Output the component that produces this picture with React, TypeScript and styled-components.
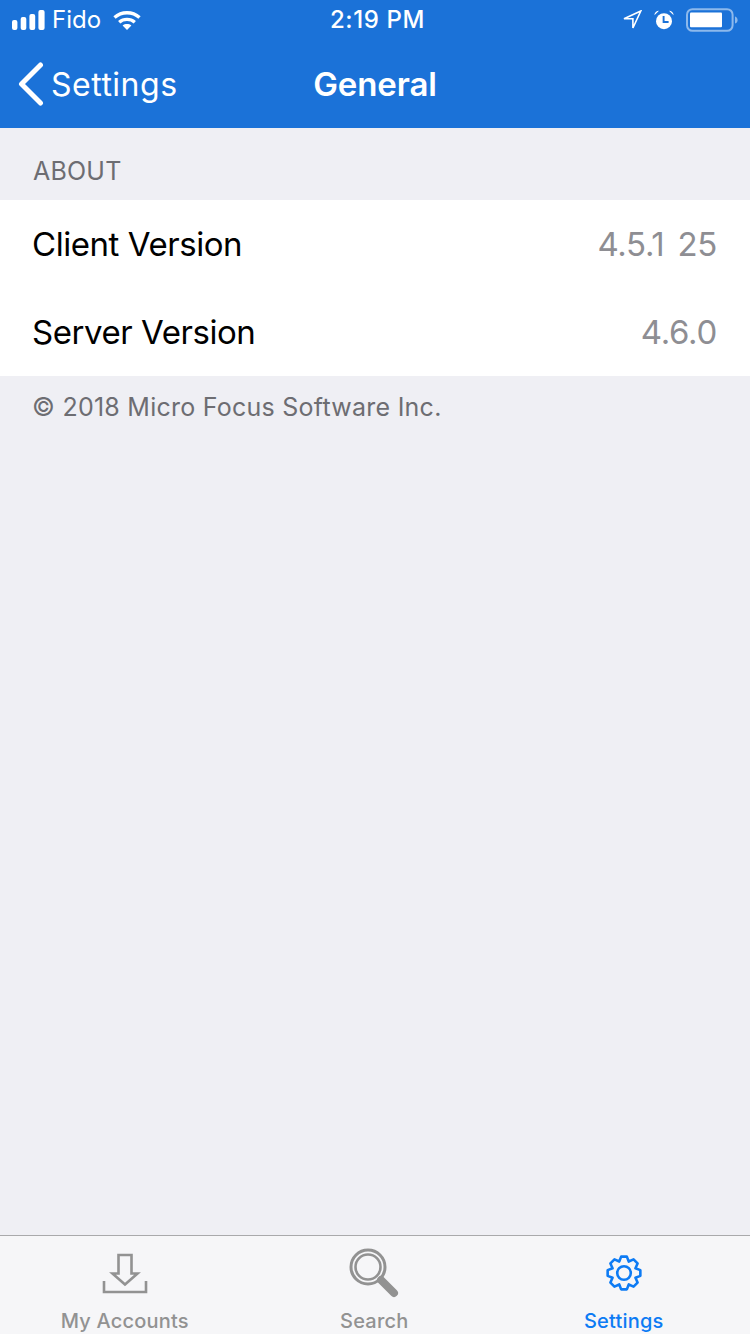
import React from 'react'
import styled, { createGlobalStyle } from 'styled-components'

const GlobalStyle = createGlobalStyle`
  html, body {
    margin: 0;
    padding: 0;
    background: #efeff4;
  }
  body {
    font-family: Inter, "Liberation Sans", sans-serif;
  }
`

const Screen = styled.div`
  width: 750px;
  height: 1334px;
  display: flex;
  flex-direction: column;
  overflow: hidden;
  background: #efeff4;
`

const Header = styled.header`
  height: 128px;
  background: #1b72d8;
  color: #fff;
  display: flex;
  flex-direction: column;
`

const StatusBar = styled.div`
  height: 40px;
  padding: 0 12px;
  display: grid;
  grid-template-columns: 1fr auto 1fr;
  align-items: center;
`

const StatusLeft = styled.div`
  display: flex;
  align-items: center;
`

const Carrier = styled.span`
  font-size: 24px;
  margin: 0 12px 0 7px;
  line-height: 40px;
`

const Clock = styled.span`
  font-size: 24px;
  font-weight: 500;
  letter-spacing: 0.6px;
  line-height: 40px;
  margin-left: 5px;
`

const StatusRight = styled.div`
  display: flex;
  align-items: center;
  justify-content: flex-end;
  gap: 12px;
`

const NavBar = styled.nav`
  height: 88px;
  display: grid;
  grid-template-columns: 1fr auto 1fr;
  align-items: center;
  padding: 0 18px;
`

const BackLink = styled.div`
  display: flex;
  align-items: center;
  gap: 7px;
  font-size: 32px;
  letter-spacing: 0.5px;
`

const Title = styled.h1`
  margin: 0;
  font-size: 33px;
  font-weight: 600;
  letter-spacing: -0.1px;
`

const Content = styled.main`
  flex: 1;
`

const SectionLabel = styled.div`
  height: 72px;
  padding: 14px 33px 0;
  display: flex;
  align-items: center;
  font-size: 25px;
  letter-spacing: 0.2px;
  color: #6d6d72;
  box-sizing: border-box;
`

const List = styled.div`
  background: #fff;
`

const Row = styled.div`
  height: 88px;
  padding: 0 33px 0 32px;
  display: flex;
  align-items: center;
  justify-content: space-between;
`

const RowLabel = styled.span`
  font-size: 33px;
  letter-spacing: -0.45px;
  color: #000;
`

const RowValue = styled.span`
  font-size: 33px;
  letter-spacing: -0.3px;
  word-spacing: 4px;
  color: #8e8e93;
`

const Footnote = styled.div`
  padding: 14px 32px 0;
  font-size: 25px;
  letter-spacing: 0.25px;
  line-height: 34px;
  color: #6d6d72;
`

const TabBar = styled.footer`
  height: 99px;
  box-sizing: border-box;
  border-top: 1px solid #a9a9ab;
  background: #f6f6f8;
  display: grid;
  grid-template-columns: repeat(3, 249.5px);
`

const Tab = styled.div<{ $active?: boolean }>`
  display: flex;
  flex-direction: column;
  align-items: center;
  color: ${p => (p.$active ? '#0d7bf4' : '#929292')};
`

const TabIcon = styled.div<{ $top: number }>`
  height: 62px;
  padding-top: ${p => p.$top}px;
  box-sizing: border-box;
  display: flex;
  align-items: flex-start;
  justify-content: center;
`

const TabLabel = styled.span`
  font-size: 20px;
  font-weight: 500;
  letter-spacing: 0.2px;
  line-height: 46px;
`

const SignalBars = () => (
  <svg width="33" height="20" viewBox="0 0 33 20" fill="#fff">
    <rect x="0" y="10" width="5.4" height="10" rx="2" />
    <rect x="8.7" y="7" width="5.6" height="13" rx="2" />
    <rect x="17.4" y="4" width="5.8" height="16" rx="2" />
    <rect x="26.4" y="0" width="6.2" height="20" rx="2" />
  </svg>
)

const WifiIcon = () => (
  <svg width="28" height="20" viewBox="0 0 28 20" fill="none" stroke="#fff" strokeWidth="3.4">
    <path d="M1.5 7.6C8.6 1.2 19.4 1.2 26.5 7.6" />
    <path d="M6.2 12.2C10.6 8.4 17.4 8.4 21.8 12.2" />
    <path d="M14 20l-4.4-4.5c2.6-1.9 6.2-1.9 8.8 0z" fill="#fff" stroke="none" />
  </svg>
)

const LocationIcon = () => (
  <svg width="20" height="20" viewBox="0 0 20 20" fill="none" stroke="#fff" strokeWidth="1.6" strokeLinejoin="miter">
    <path d="M18.8 1 2 8.8h8.9v9.2z" />
  </svg>
)

const AlarmIcon = () => (
  <svg width="20" height="20" viewBox="0 0 20 20">
    <circle cx="10" cy="11.2" r="8" fill="#fff" />
    <path d="M.4 5.2C.6 2.6 2.4.8 5 .8zM19.6 5.2C19.4 2.6 17.6.8 15 .8z" fill="#fff" />
    <path d="M9.6 6v6h5" fill="none" stroke="#1b72d8" strokeWidth="1.9" />
  </svg>
)

const BatteryIcon = () => (
  <svg width="52" height="24" viewBox="0 0 52 24">
    <rect x="1" y="1.2" width="45.6" height="21.6" rx="5.5" fill="none" stroke="#fff" strokeOpacity="0.5" strokeWidth="2" />
    <rect x="4" y="4.6" width="32" height="14.6" rx="1" fill="#fff" />
    <path d="M49 8.4c1.8.6 2.6 2 2.6 3.6s-.8 3-2.6 3.6z" fill="#fff" fillOpacity="0.5" />
  </svg>
)

const BackChevron = () => (
  <svg width="26" height="44" viewBox="0 0 26 44" fill="none" stroke="#fff" strokeWidth="5" strokeLinecap="round" strokeLinejoin="round">
    <path d="M22.5 3 3.5 22l19 19" />
  </svg>
)

const DownloadIcon = () => (
  <svg width="46" height="41" viewBox="0 0 46 41" fill="none" stroke="currentColor" strokeWidth="2.6">
    <path d="M16.5 2h13v18.5h6L23 31.5 10.5 20.5h6z" />
    <path d="M2 28v11h42V28" />
  </svg>
)

const SearchIcon = () => (
  <svg width="52" height="52" viewBox="0 0 52 52" fill="none">
    <circle cx="20" cy="20" r="17" stroke="currentColor" strokeWidth="3" />
    <circle cx="20" cy="20" r="12.5" stroke="currentColor" strokeWidth="2.6" />
    <path d="M33 33 46 46" stroke="currentColor" strokeWidth="8" strokeLinecap="round" />
  </svg>
)

// 8 teeth around the centre, worked out rather than typed by hand
const gearPath = () => {
  const points: string[] = []
  const teeth = 8
  for (let i = 0; i < teeth; i++) {
    const a = (i / teeth) * Math.PI * 2 - Math.PI / 2
    const step = (Math.PI * 2) / teeth
    const pairs: [number, number][] = [
      [12.4, -0.5],
      [16.6, -0.22],
      [16.6, 0.22],
      [12.4, 0.5],
    ]
    pairs.forEach(([r, off]) => {
      const t = a + off * step
      points.push(`${(18 + r * Math.cos(t)).toFixed(2)} ${(18 + r * Math.sin(t)).toFixed(2)}`)
    })
  }
  return `M${points.join('L')}Z`
}

const GearIcon = () => (
  <svg width="36" height="36" viewBox="0 0 36 36" fill="none" stroke="currentColor" strokeWidth="2.6" strokeLinejoin="round">
    <path d={gearPath()} />
    <circle cx="18" cy="18" r="6.8" />
  </svg>
)

const App = () => {
  return <Screen>
    <GlobalStyle />
    <Header>
      <StatusBar>
        <StatusLeft>
          <SignalBars />
          <Carrier>Fido</Carrier>
          <WifiIcon />
        </StatusLeft>
        <Clock>2:19 PM</Clock>
        <StatusRight>
          <LocationIcon />
          <AlarmIcon />
          <BatteryIcon />
        </StatusRight>
      </StatusBar>
      <NavBar>
        <BackLink>
          <BackChevron />
          Settings
        </BackLink>
        <Title>General</Title>
      </NavBar>
    </Header>
    <Content>
      <SectionLabel>ABOUT</SectionLabel>
      <List>
        <Row>
          <RowLabel>Client Version</RowLabel>
          <RowValue>4.5.1 25</RowValue>
        </Row>
        <Row>
          <RowLabel>Server Version</RowLabel>
          <RowValue>4.6.0</RowValue>
        </Row>
      </List>
      <Footnote>© 2018 Micro Focus Software Inc.</Footnote>
    </Content>
    <TabBar>
      <Tab>
        <TabIcon $top={17}><DownloadIcon /></TabIcon>
        <TabLabel>My Accounts</TabLabel>
      </Tab>
      <Tab>
        <TabIcon $top={11}><SearchIcon /></TabIcon>
        <TabLabel>Search</TabLabel>
      </Tab>
      <Tab $active>
        <TabIcon $top={19}><GearIcon /></TabIcon>
        <TabLabel>Settings</TabLabel>
      </Tab>
    </TabBar>
  </Screen>
}

export default App
